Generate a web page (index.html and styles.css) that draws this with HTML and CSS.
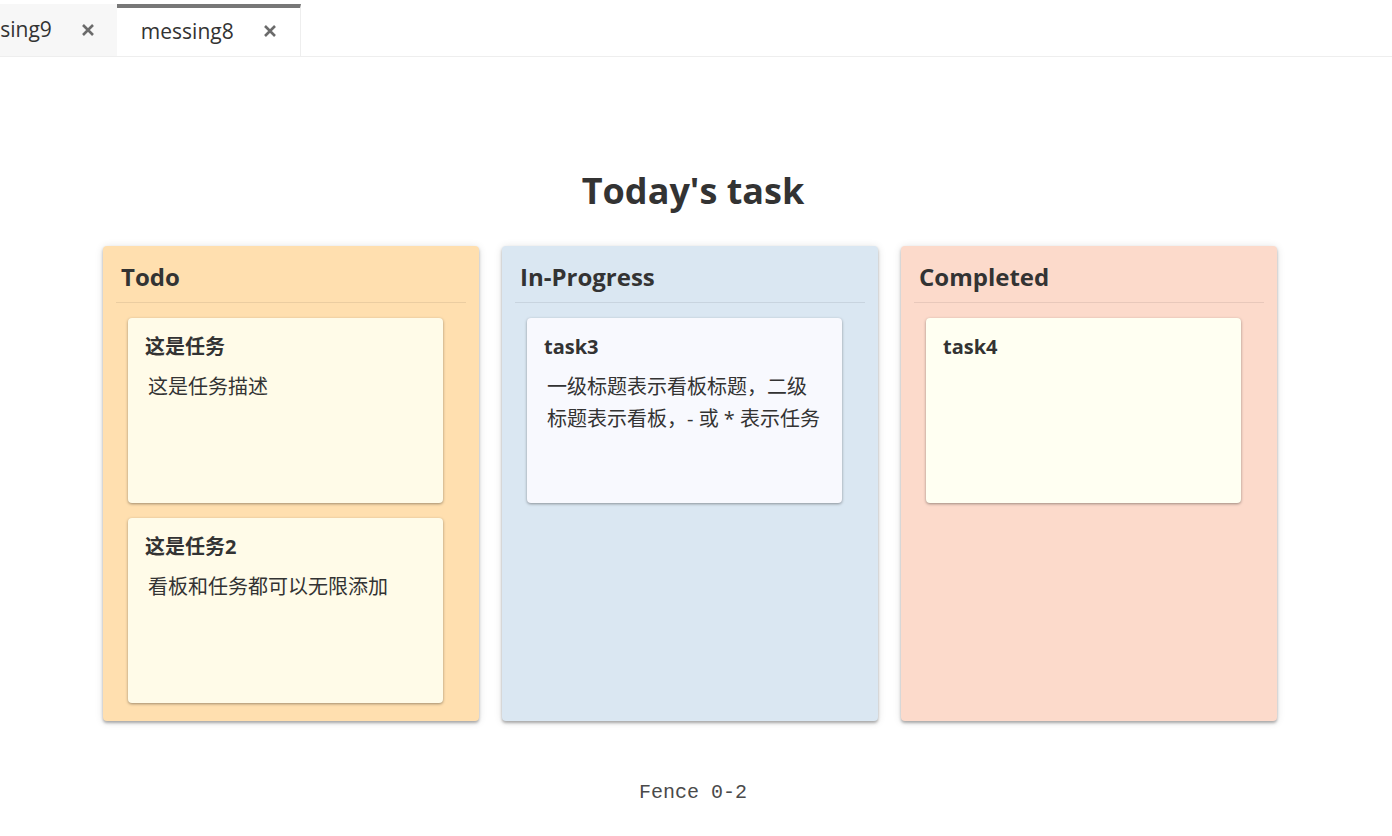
FILE: index.html
```html
<!DOCTYPE html>
<html>
<head>
<meta charset="utf-8">
<link rel="stylesheet" href="styles.css">
</head>
<body>
<div class="tabbar">
  <div class="tabs">
    <div class="tab tab-first"><span class="tab-name">messing9</span><svg class="tab-close" width="14" height="14" viewBox="0 0 14 14"><path d="M2 2 L12 12 M12 2 L2 12" stroke="#6b6b6b" stroke-width="2.6" stroke-linecap="butt" fill="none"/></svg></div>
    <div class="tab tab-active"><span class="tab-name">messing8</span><svg class="tab-close" width="14" height="14" viewBox="0 0 14 14"><path d="M2 2 L12 12 M12 2 L2 12" stroke="#6b6b6b" stroke-width="2.6" stroke-linecap="butt" fill="none"/></svg></div>
  </div>
</div>
<main class="page">
  <h1 class="title">Today's task</h1>
  <div class="board">
    <section class="column col-todo">
      <h2 class="col-head">Todo</h2>
      <div class="cards">
        <div class="card card-todo">
          <div class="card-title">这是任务</div>
          <div class="card-desc">这是任务描述</div>
        </div>
        <div class="card card-todo">
          <div class="card-title">这是任务2</div>
          <div class="card-desc">看板和任务都可以无限添加</div>
        </div>
      </div>
    </section>
    <section class="column col-progress">
      <h2 class="col-head">In-Progress</h2>
      <div class="cards">
        <div class="card card-progress">
          <div class="card-title">task3</div>
          <div class="card-desc">一级标题表示看板标题，二级标题表示看板，- 或 * 表示任务</div>
        </div>
      </div>
    </section>
    <section class="column col-done">
      <h2 class="col-head">Completed</h2>
      <div class="cards">
        <div class="card card-done">
          <div class="card-title">task4</div>
        </div>
      </div>
    </section>
  </div>
  <div class="footer">Fence 0-2</div>
</main>
</body>
</html>
```
FILE: styles.css
```css
html, body {
  margin: 0;
  padding: 0;
  background: #ffffff;
}
body {
  font-family: "Open Sans", "Noto Sans CJK SC", sans-serif;
  color: #333333;
}
.tabbar {
  padding-top: 4px;
  height: 52px;
  border-bottom: 1px solid #eeeeee;
  overflow: hidden;
}
.tabs {
  display: flex;
  height: 52px;
  margin-left: -65px;
}
.tab {
  display: flex;
  align-items: center;
  height: 52px;
  box-sizing: border-box;
  padding: 0 22px 0 24px;
  font-size: 21px;
  color: #333;
}
.tab-name {
  white-space: nowrap;
}
.tab-first {
  background: #f7f7f7;
}
.tab-active {
  background: #ffffff;
  border-top: 4px solid #777777;
  border-right: 1px solid #eeeeee;
  padding-right: 23px;
  padding-bottom: 3px;
}
.tab-first .tab-name {
  padding-bottom: 3px;
}
.tab-close {
  margin-left: 29px;
  flex: none;
}
.page {
  display: flex;
  flex-direction: column;
  align-items: center;
  padding-right: 6px;
}
.title {
  margin: 111px 0 0 0;
  font-size: 36px;
  font-weight: 700;
  line-height: 46px;
  color: #333;
}
.board {
  display: flex;
  gap: 23px;
  margin-top: 32px;
  margin-right: 6px;
}
.column {
  width: 376px;
  height: 475px;
  box-sizing: border-box;
  border-radius: 4px;
  box-shadow: 0 2px 3px rgba(0, 0, 0, 0.3), 0 1px 8px rgba(0, 0, 0, 0.12);
  padding: 0 13px;
}
.col-todo { background: #ffdfaf; }
.col-progress { background: #dae7f2; }
.col-done { background: #fcdacb; }
.col-head {
  margin: 0;
  font-size: 24px;
  font-weight: 700;
  line-height: 28px;
  padding: 17px 5px 11px;
  border-bottom: 1px solid rgba(0, 0, 0, 0.08);
}
.cards {
  display: flex;
  flex-direction: column;
  gap: 15px;
  padding: 15px 12px;
}
.card {
  width: 315px;
  height: 185px;
  box-sizing: border-box;
  border-radius: 4px;
  padding: 15px 17px;
  box-shadow: 0 1px 3px rgba(0, 0, 0, 0.38);
}
.card-todo { background: #fffbe8; }
.card-progress { background: #f8f9fe; }
.card-done { background: #fffff2; }
.card-title {
  font-size: 20px;
  font-weight: 700;
  line-height: 28px;
}
.card-desc {
  margin-top: 10px;
  padding-left: 3px;
  font-size: 20px;
  line-height: 32px;
  color: #333;
}
.footer {
  margin-top: 60px;
  font-family: "Liberation Mono", monospace;
  font-size: 20px;
  color: #4a4a4a;
}
```
